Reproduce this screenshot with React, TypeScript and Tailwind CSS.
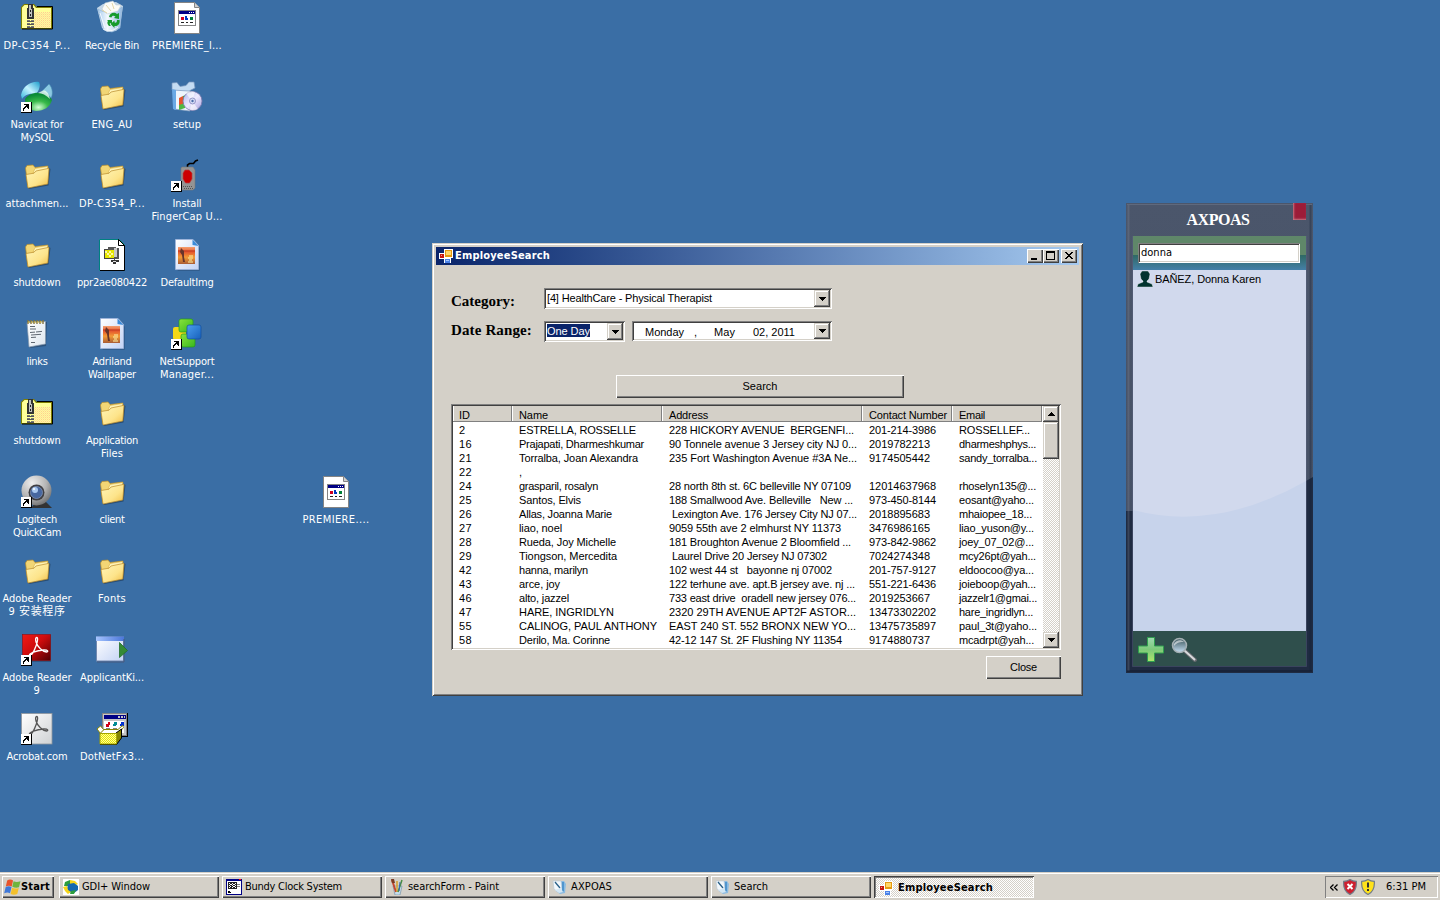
import { useLayoutEffect, useRef } from "react";
import type { ReactNode } from "react";

/* ---------- text with a fixed advance width ---------- */

function Fit({ w, children, className = "" }: { w: number; children: string; className?: string }) {
  const ref = useRef<HTMLSpanElement>(null);
  useLayoutEffect(() => {
    const el = ref.current;
    if (!el) return;
    el.style.letterSpacing = "0px";
    const natural = el.getBoundingClientRect().width;
    el.style.letterSpacing = `${(w + 1 - natural) / Array.from(children).length}px`;
  }, [w, children]);
  return (
    <span ref={ref} className={`inline-block whitespace-pre ${className}`}>
      {children}
    </span>
  );
}

/* ---------- 32px desktop icons ---------- */

function Svg32({ children }: { children: ReactNode }) {
  return (
    <svg width="32" height="32" viewBox="0 0 32 32" className="block overflow-visible">
      {children}
    </svg>
  );
}

const Shortcut = () => (
  <g shapeRendering="crispEdges">
    <rect x="0" y="21" width="11" height="11" fill="#000" />
    <rect x="0" y="21" width="10" height="10" fill="#fff" />
    <path d="M3 23h5v5h-1v-1h-1v-1h-1v1h-1v1h-1v2h-1v-3h1v-1h1v-1h1v-1h-2z" fill="#000" />
  </g>
);

const Folder = () => (
  <Svg32>
    <path d="M8 29 27.500 25.500 29.500 9 28 8 26 24 7 28z" fill="#1d3654" opacity=".6" />
    <path d="M4.500 8 6 5.500 12 5 14 7.500 27 6 26 21 7 27z" fill="#f2d675" stroke="#b78c29" strokeWidth=".7" />
    <path d="M14 8.500 26.500 6.500 26.500 12 12 13z" fill="#fff3b5" stroke="#d4a93c" strokeWidth=".5" />
    <path d="M5 14.500 13 13.200 15 11 28 8.300 26.800 24 7 28z" fill="url(#folderFront)" stroke="#b9892a" strokeWidth=".7" />
  </Svg32>
);

const ZipFolder = () => (
  <Svg32>
    <path d="M0 5 3 2h10l3 3h15v22H0z" fill="#808000" />
    <path d="M1 5.500 3.500 3h9L15 6h15v20H1z" fill="#ffff99" />
    <path d="M13 10h17v16H13z" fill="url(#peachDots)" />
    <path d="M16 4.500h15.500v22.500H1" fill="none" stroke="#000" strokeWidth="1" />
    <g shapeRendering="crispEdges">
      <path d="M7 2h5v4h1v11H6V6h1z" fill="#333" />
      <path d="M8 3h2v4h1v8H8z" fill="#c0c0c0" />
      <path d="M9 8h1v2H9zM9 12h1v2H9z" fill="#222" />
      <path d="M6 18h3v2H6zM10 18h3v2h-3zM6 21h3v2H6zM10 21h3v2h-3zM6 24h3v2H6zM10 24h3v2h-3z" fill="#777" />
      <path d="M6 19h7M6 22h7M6 25h7" stroke="#555" />
    </g>
  </Svg32>
);

const RecycleBin = () => (
  <Svg32>
    <path d="M1 6 7 2l13-2 7 4-3 21-4 4-9 1-5-4z" fill="#dceaf5" opacity=".85" />
    <path d="M2 7c6 5 18 4 24-2L24 26l-8 4-8-2z" fill="url(#glass)" stroke="#8fb4d6" strokeWidth=".6" />
    <path d="M9 1l8-2 3 4 5 0-3 6-11 3-5-5z" fill="#fbfbf6" stroke="#b7c6d0" strokeWidth=".5" />
    <path d="M10 3l5 6M16 1l2 6M6 8l5 3" stroke="#e3d7aa" strokeWidth="1" />
    <path d="M13 15c1-5 6-5 8-3l2-1v6l-5-1 1.500-1.500c-2-1.500-3.500-1-4 1zM21 18h2.500c1 4-2 6.500-5 6v2l-4-4 4-3.500v2c2 .5 2.500-.5 2.500-2.500zM13 24c-2-2-2-4-1-5l-1-1 5 0 0 4-2-1c-.5 1 0 2 1 3z" fill="#169b2b" />
    <path d="M4 11l5 15M7 27c5 3 11 2 15-2" fill="none" stroke="#fff" strokeWidth="1" opacity=".8" />
  </Svg32>
);

const ExePage = () => (
  <Svg32>
    <path d="M3.500.5h20l5 5v26h-25z" fill="#fff" stroke="#848484" />
    <path d="M23.500.5v5h5" fill="#d0d0d0" stroke="#848484" />
    <g shapeRendering="crispEdges">
      <rect x="7" y="8" width="18" height="16" fill="#848484" />
      <rect x="8" y="9" width="16" height="14" fill="#fff" />
      <rect x="8" y="9" width="16" height="3" fill="#000084" />
      <path d="M18 10.500h1M20 10.500h1M22 10.500h1" stroke="#fff" />
      <path d="M10 15h3v3h-3z" fill="#d00020" />
      <path d="M14 14h2v2h1v2h-3z" fill="#0038c0" />
      <path d="M19 15h3v3h-3z" fill="#008038" />
      <path d="M10 20.500h3M15 20.500h2M19 20.500h3" stroke="#222" />
    </g>
  </Svg32>
);

const Navicat = () => (
  <Svg32>
    <path d="M0 14C2 5 10 0 18 1c2 3 0 9-3 12C10 12 4 13 1 18z" fill="url(#cyan)" />
    <path d="M21 10 28 3c4 4 4 11 2 14-2-3-5-5-9-7z" fill="#8cc9e2" stroke="#4a91b6" strokeWidth=".6" />
    <path d="M4 18c3-5 12-8 19-5 4 1 7 4 8 6-2 7-8 11-16 11C8 29 4 24 4 18z" fill="url(#greenBall)" />
    <path d="M17 12c4 0 8 2 12 6-2-9-6-9-8-8z" fill="#e9fff0" opacity=".8" />
    <Shortcut />
  </Svg32>
);

const Setup = () => (
  <Svg32>
    <path d="M2 5 19 7v23L3 28z" fill="#eef5fc" stroke="#8ba6c5" strokeWidth=".7" />
    <path d="M1 2 6 1.500l3 4 6-1 3-3.500 5 0 1 6-6 3-17-1z" fill="#c4dcf3" stroke="#7997bd" strokeWidth=".7" />
    <path d="M1 8 5 9v20l-3-1z" fill="#69a9e5" />
    <path d="M8 17l4-2v9l-4 2z" fill="#e5542d" />
    <path d="M12 15l3-1v9l-3 1z" fill="#45a33a" />
    <path d="M8 24l6-2v5l-6 2z" fill="#4fb843" />
    <circle cx="21.500" cy="20" r="9.500" fill="url(#disc)" stroke="#7d7aac" strokeWidth=".8" />
    <path d="M21 20 15 12.500a9 9 0 0 1 9-1.500zM21 20l6 8a10 10 0 0 1-8 .8z" fill="#fff" opacity=".6" />
    <circle cx="21.500" cy="20" r="3" fill="#d8dff8" stroke="#8080b8" strokeWidth=".8" />
    <circle cx="21.500" cy="20" r="1.200" fill="#4d6ea8" />
  </Svg32>
);

const FingerCap = () => (
  <Svg32>
    <path d="M16.500 7V5l2-1.500h4l2-2.500 2.500-1" fill="none" stroke="#000" strokeWidth="1.600" />
    <path d="M11 7h11l2 3v18l-2 2H10V8z" fill="#949494" stroke="#777" strokeWidth=".6" />
    <path d="M14 10h4l3 3v6l-2.500 4h-4L12 19v-6z" fill="#cc0000" stroke="#b34040" strokeWidth=".7" />
    <path d="M12 26.500h9M13 28.500h9" stroke="#555" strokeDasharray="1 1" />
    <Shortcut />
  </Svg32>
);

const WinZipPage = () => (
  <Svg32>
    <path d="M3.500.5h20l5 5v26h-25z" fill="#fff" stroke="#008080" />
    <path d="M4 31.500h24.500V6" fill="none" stroke="#000" />
    <path d="M22.500.5v6h6z" fill="#fff" stroke="#000" />
    <g shapeRendering="crispEdges">
      <path d="M8 10h14v9h-4v1H8z" fill="#444" />
      <path d="M12 8h8v1h3v11h-4v1h-1v-3h2v-6h-8z" fill="#555" />
      <path d="M9 11h9v8H9z" fill="#e5e600" />
      <path d="M9 12h2v2H9zM13 12h2v2h-2zM11 14h2v2h-2zM15 14h2v2h-2zM13 16h2v2h-2z" fill="#fff8a0" />
      <path d="M18 9h3v9h-3z" fill="#c8c8c8" />
      <path d="M15 21h8v2h-3v2h-3v-2h-2z" fill="#333" />
      <path d="M17 22h3v1h-3z" fill="#ddd" />
    </g>
  </Svg32>
);

const PicturePage = () => (
  <Svg32>
    <path d="M5 1.500h17l6 6.500v23l-22 0z" fill="#1d3654" opacity=".4" transform="translate(.7 .7)" />
    <path d="M4.500 .5h17.500l5.500 6v24h-23z" fill="url(#page)" stroke="#9fb5dc" strokeWidth=".8" />
    <path d="M21.500 .5l6 6.500-6-1z" fill="#3b8bd9" />
    <g>
      <rect x="7" y="8" width="17" height="17" fill="url(#sunset)" />
      <path d="M7 12h17" stroke="#bb2e18" />
      <path d="M10 9l3 3v6l1 5h-2l-1-7-2-3z" fill="#67352b" />
      <path d="M18 17h4M17 19h5M18 21h3M17 23h5" stroke="#fff4a8" strokeWidth="1" />
    </g>
  </Svg32>
);

const Notepad = () => (
  <Svg32>
    <path d="M6 5 26 4 25 28 9 30z" fill="#1d3654" opacity=".5" />
    <path d="M6 4.500 24.500 3.500 24.500 26 8 29z" fill="url(#note)" stroke="#8799ad" strokeWidth=".7" />
    <path d="M7 2v4M10 2v4M13 2v4M16 2v4M19 2v4M22 2v4" stroke="#86743f" strokeWidth="1.400" />
    <path d="M8 3v2M11 3v2M14 3v2M17 3v2M20 3v2" stroke="#e7c443" strokeWidth="1" />
    <path d="M9 8.500h5M9 11h6M9 14.500l5-.4M15 14l6-.6M10 17l10-.7M10 19.500l5-.3M10 24.500h4" stroke="#5f6771" strokeWidth="1" />
  </Svg32>
);

const NetSupport = () => (
  <Svg32>
    <rect x="2" y="9" width="13" height="13" rx="2" fill="#f5d918" />
    <rect x="10" y="16" width="14" height="13" rx="2" fill="url(#lime)" stroke="#259c17" strokeWidth=".7" />
    <rect x="8" y="1" width="14" height="13" rx="2" fill="url(#lime)" stroke="#259c17" strokeWidth=".7" />
    <rect x="16" y="7" width="14" height="14" rx="2" fill="url(#blueBox)" stroke="#124f9d" strokeWidth=".7" />
    <Shortcut />
  </Svg32>
);

const QuickCam = () => (
  <Svg32>
    <path d="M10 32 15 26h10l6 6z" fill="#333" />
    <circle cx="15.500" cy="14.500" r="15" fill="url(#silver)" />
    <circle cx="15.500" cy="16.500" r="8" fill="#3f3f43" />
    <circle cx="15.500" cy="16.500" r="6" fill="#4767a0" stroke="#7d91b5" strokeWidth=".8" />
    <circle cx="14" cy="14" r="3" fill="#a9c8ef" />
    <circle cx="13" cy="13" r="1" fill="#fff" />
    <Shortcut />
  </Svg32>
);

const Loops = ({ stroke }: { stroke: string }) => (
  <path
    d="M8.500 21.500c-1-2 7-5 14-5.500 5-.3 5 2 3 2-4-.5-9-5-10.500-10-.8-3-.3-4.500.7-4.500 1.500 0 1 4-.7 8.500-2 5.500-5 10-6.500 9.500z"
    fill="none"
    stroke={stroke}
    strokeWidth="1.300"
  />
);

const AdobeReader = () => (
  <Svg32>
    <rect x="2" y="1" width="28" height="27" fill="#243c5e" opacity=".5" />
    <rect x="1.500" y=".5" width="28" height="26" fill="url(#adobe)" stroke="#8e0d10" strokeWidth=".6" />
    <Loops stroke="#fff" />
    <Shortcut />
  </Svg32>
);

const AcrobatCom = () => (
  <Svg32>
    <rect x=".5" y=".5" width="30.500" height="30.500" fill="url(#acro)" stroke="#8e969d" strokeWidth=".8" />
    <Loops stroke="#555" />
    <Shortcut />
  </Svg32>
);

const AppWindow = () => (
  <Svg32>
    <rect x="0.500" y="3" width="27" height="24" fill="url(#page)" stroke="#7289b0" strokeWidth="1" />
    <rect x="0" y="2.500" width="28" height="4.500" fill="url(#bar)" />
    <path d="M28 5v23H1" stroke="#47597e" strokeWidth="1" fill="none" />
    <path d="M23.500 8.500v15l8-7z" fill="#358a35" stroke="#226e2a" strokeWidth=".8" />
  </Svg32>
);

const DotNetSetup = () => (
  <Svg32>
    <g shapeRendering="crispEdges">
      <rect x="6" y="0" width="26" height="24" fill="#000" />
      <rect x="6" y="0" width="25" height="23" fill="#848484" />
      <rect x="7" y="1" width="23" height="21" fill="#c6c6c6" />
      <rect x="8" y="2" width="22" height="4" fill="#000084" />
      <path d="M22 3h2v2h-2zM25 3h2v2h-2zM28 3h1v2h-1z" fill="#c6c6c6" />
      <rect x="8" y="8" width="20" height="12" fill="#fff" />
      <path d="M10 11h2v-2h2v3h-1v2h-3z" fill="#d00018" />
      <path d="M18 9h3v3h-1v1h-3v-2h1z" fill="#008c94" />
      <path d="M25 9h3v4h-4v-2h1z" fill="#0030d0" />
      <path d="M10 15.500h4M17 15.500h4" stroke="#848484" />
    </g>
    <path d="M4.500 20.500 1 16l3.500-3 3.500 4z" fill="#fff" stroke="#848400" />
    <path d="M4 20.500 8 16.500h14l4.500-4 1 2L22 21z" fill="#fff" stroke="#848400" />
    <path d="M20 20l5.500-4v9l-5 6.500H4" fill="#848400" stroke="#000" />
    <path d="M4 20.500h16.500v10.500H4z" fill="url(#oliveDots)" stroke="#a5a500" />
  </Svg32>
);

function Defs() {
  return (
    <svg width="0" height="0" className="absolute">
      <defs>
        <linearGradient id="folderFront" x1="0" y1="0" x2="1" y2="1"><stop offset="0" stopColor="#fff6ba" /><stop offset=".6" stopColor="#fde48b" /><stop offset="1" stopColor="#f0bd45" /></linearGradient>
        <linearGradient id="glass" x1="0" y1="0" x2="1" y2="0"><stop offset="0" stopColor="#a8cdf0" /><stop offset=".4" stopColor="#f4f9fd" /><stop offset="1" stopColor="#93b9e1" /></linearGradient>
        <linearGradient id="cyan" x1="0" y1="1" x2="1" y2="0"><stop offset="0" stopColor="#36b8de" /><stop offset=".5" stopColor="#c5f3ff" /><stop offset="1" stopColor="#1d9dcc" /></linearGradient>
        <radialGradient id="greenBall" cx=".5" cy=".8" r=".7"><stop offset="0" stopColor="#d4ffd5" /><stop offset=".5" stopColor="#3aba4a" /><stop offset="1" stopColor="#0b8c38" /></radialGradient>
        <linearGradient id="disc" x1="0" y1="0" x2="1" y2="1"><stop offset="0" stopColor="#aeb6ed" /><stop offset=".5" stopColor="#efeaff" /><stop offset="1" stopColor="#a6a0de" /></linearGradient>
        <linearGradient id="page" x1="0" y1="0" x2="1" y2="1"><stop offset="0" stopColor="#ffffff" /><stop offset="1" stopColor="#c3d3f5" /></linearGradient>
        <linearGradient id="sunset" x1="0" y1="0" x2="0" y2="1"><stop offset="0" stopColor="#f4a070" /><stop offset=".3" stopColor="#e4572e" /><stop offset=".6" stopColor="#f39a35" /><stop offset="1" stopColor="#a95c35" /></linearGradient>
        <linearGradient id="note" x1="0" y1="0" x2="1" y2="1"><stop offset="0" stopColor="#ffffff" /><stop offset="1" stopColor="#dce5ee" /></linearGradient>
        <linearGradient id="lime" x1="0" y1="0" x2="1" y2="1"><stop offset="0" stopColor="#8be23c" /><stop offset="1" stopColor="#36b81c" /></linearGradient>
        <linearGradient id="blueBox" x1="0" y1="0" x2="1" y2="1"><stop offset="0" stopColor="#4a9eee" /><stop offset="1" stopColor="#1760bc" /></linearGradient>
        <radialGradient id="silver" cx=".35" cy=".25" r=".8"><stop offset="0" stopColor="#eeeeee" /><stop offset=".6" stopColor="#b4b4b4" /><stop offset="1" stopColor="#707070" /></radialGradient>
        <linearGradient id="adobe" x1="0" y1="0" x2="1" y2="1"><stop offset="0" stopColor="#f01a16" /><stop offset=".45" stopColor="#cf0c0d" /><stop offset="1" stopColor="#4f0003" /></linearGradient>
        <linearGradient id="acro" x1="0" y1="0" x2="1" y2="1"><stop offset="0" stopColor="#ffffff" /><stop offset="1" stopColor="#cfd2d4" /></linearGradient>
        <linearGradient id="bar" x1="0" y1="0" x2="1" y2="0"><stop offset="0" stopColor="#a5c4ff" /><stop offset="1" stopColor="#4a76d8" /></linearGradient>
        <linearGradient id="plus" x1="0" y1="0" x2="0" y2="1"><stop offset="0" stopColor="#9ed9b0" /><stop offset=".5" stopColor="#7cc97a" /><stop offset="1" stopColor="#aee66c" /></linearGradient>
        <linearGradient id="lens" x1="0" y1="0" x2="0" y2="1"><stop offset="0" stopColor="#38545a" /><stop offset="1" stopColor="#c7e0f4" /></linearGradient>
        <pattern id="peachDots" width="2" height="2" patternUnits="userSpaceOnUse"><rect width="1" height="1" fill="#ffcb94" /><rect x="1" y="1" width="1" height="1" fill="#ffdfa0" /></pattern>
        <pattern id="oliveDots" width="2" height="2" patternUnits="userSpaceOnUse"><rect width="2" height="2" fill="#e7e700" /><rect width="1" height="1" fill="#fffb9c" /><rect x="1" y="1" width="1" height="1" fill="#fffb9c" /></pattern>
      </defs>
    </svg>
  );
}

/* ---------- desktop shortcuts ---------- */

type Line = [string, number];
type Item = { icon: ReactNode; lines: Line[] };

const columns: Item[][] = [
  [
    { icon: <ZipFolder />, lines: [["DP-C354_P...", 66]] },
    { icon: <Navicat />, lines: [["Navicat for", 52], ["MySQL", 32]] },
    { icon: <Folder />, lines: [["attachmen...", 62]] },
    { icon: <Folder />, lines: [["shutdown", 46]] },
    { icon: <Notepad />, lines: [["links", 20]] },
    { icon: <ZipFolder />, lines: [["shutdown", 46]] },
    { icon: <QuickCam />, lines: [["Logitech", 39], ["QuickCam", 47]] },
    { icon: <Folder />, lines: [["Adobe Reader", 68], ["9 安装程序", 56]] },
    { icon: <AdobeReader />, lines: [["Adobe Reader", 68], ["9", 6]] },
    { icon: <AcrobatCom />, lines: [["Acrobat.com", 60]] },
  ],
  [
    { icon: <RecycleBin />, lines: [["Recycle Bin", 53]] },
    { icon: <Folder />, lines: [["ENG_AU", 40]] },
    { icon: <Folder />, lines: [["DP-C354_P...", 65]] },
    { icon: <WinZipPage />, lines: [["ppr2ae080422", 69]] },
    { icon: <PicturePage />, lines: [["Adriland", 38], ["Wallpaper", 47]] },
    { icon: <Folder />, lines: [["Application", 51], ["Files", 21]] },
    { icon: <Folder />, lines: [["client", 24]] },
    { icon: <Folder />, lines: [["Fonts", 27]] },
    { icon: <AppWindow />, lines: [["ApplicantKi...", 63]] },
    { icon: <DotNetSetup />, lines: [["DotNetFx3...", 63]] },
  ],
  [
    { icon: <ExePage />, lines: [["PREMIERE_l...", 69]] },
    { icon: <Setup />, lines: [["setup", 27]] },
    { icon: <FingerCap />, lines: [["Install", 28], ["FingerCap U...", 70]] },
    { icon: <PicturePage />, lines: [["DefaultImg", 52]] },
    { icon: <NetSupport />, lines: [["NetSupport", 54], ["Manager...", 53]] },
  ],
];

function DesktopIcon({ icon, lines }: Item) {
  return (
    <div className="flex h-[79px] w-[75px] flex-col items-center pr-px text-[11px] leading-[13px] text-white">
      <div className="flex h-[39px] shrink-0 items-start pt-0.5 pr-px">{icon}</div>
      {lines.map(([text, w]) => (
        <Fit key={text} w={w} className="h-[13px] shrink-0">{text}</Fit>
      ))}
    </div>
  );
}

/* ---------- classic controls ---------- */

const raised =
  "bg-[#d4d0c8] shadow-[inset_1px_1px_0_#fff,inset_-1px_-1px_0_#404040,inset_-2px_-2px_0_#808080]";
const scrollRaised =
  "bg-[#d4d0c8] shadow-[inset_-1px_-1px_0_#404040,inset_1px_1px_0_#d4d0c8,inset_-2px_-2px_0_#808080,inset_2px_2px_0_#fff]";
const sunken =
  "bg-white shadow-[inset_1px_1px_0_#808080,inset_-1px_-1px_0_#fff,inset_2px_2px_0_#404040,inset_-2px_-2px_0_#d4d0c8]";
const dither =
  "bg-[repeating-conic-gradient(#fff_0_25%,#d4d0c8_0_50%)] bg-[length:2px_2px]";

const Arrow = ({ up = false }: { up?: boolean }) => (
  <svg width="7" height="4" viewBox="0 0 7 4" shapeRendering="crispEdges" className={up ? "rotate-180" : ""}>
    <path d="M0 0h7v1H6v1H5v1H4v1H3V3H2V2H1V1H0z" fill="#000" />
  </svg>
);

const ScrollButton = ({ up = false, tall = false }: { up?: boolean; tall?: boolean }) => (
  <div className={`flex w-4 shrink-0 items-center justify-center ${tall ? "h-[17px]" : "h-4"} ${scrollRaised}`}>
    <Arrow up={up} />
  </div>
);

const FormIcon = () => (
  <svg width="15" height="15" viewBox="0 0 15 15" shapeRendering="crispEdges">
    <rect x="0" y="4" width="5" height="6" fill="#fff" />
    <rect x="1" y="5" width="4" height="4" fill="#c81810" />
    <rect x="2" y="6" width="1" height="1" fill="#f59b84" />
    <rect x="5" y="0" width="9" height="9" fill="#fff" />
    <rect x="6" y="1" width="7" height="7" fill="#e59a10" />
    <rect x="7" y="2" width="5" height="4" fill="#ffd768" />
    <rect x="5" y="9" width="7" height="5" fill="#fff" />
    <rect x="6" y="10" width="5" height="4" fill="#4a82e8" />
    <rect x="7" y="11" width="3" height="1" fill="#a5c7ff" />
  </svg>
);

/* ---------- employee list ---------- */

type Cell = [string, number];
type Row = [string, Cell, Cell, Cell, Cell];

const rows: Row[] = [
  ["2", ["ESTRELLA, ROSSELLE", 116], ["228 HICKORY AVENUE  BERGENFI...", 184], ["201-214-3986", 66], ["ROSSELLEF...", 70]],
  ["16", ["Prajapati, Dharmeshkumar", 124], ["90 Tonnele avenue 3 Jersey city NJ 0...", 187], ["2019782213", 60], ["dharmeshphys...", 76]],
  ["21", ["Torralba, Joan Alexandra", 118], ["235 Fort Washington Avenue #3A Ne...", 187], ["9174505442", 60], ["sandy_torralba...", 77]],
  ["22", [",", 3], ["", 0], ["", 0], ["", 0]],
  ["24", ["grasparil, rosalyn", 78], ["28 north 8th st. 6C belleville NY 07109", 181], ["12014637968", 66], ["rhoselyn135@...", 76]],
  ["25", ["Santos, Elvis", 61], ["188 Smallwood Ave. Belleville   New ...", 183], ["973-450-8144", 66], ["eosant@yaho...", 74]],
  ["26", ["Allas, Joanna Marie", 92], [" Lexington Ave. 176 Jersey City NJ 07...", 187], ["2018895683", 60], ["mhaiopee_18...", 72]],
  ["27", ["liao, noel", 42], ["9059 55th ave 2 elmhurst NY 11373", 171], ["3476986165", 60], ["liao_yuson@y...", 74]],
  ["28", ["Rueda, Joy Michelle", 96], ["181 Broughton Avenue 2 Bloomfield ...", 181], ["973-842-9862", 66], ["joey_07_02@...", 74]],
  ["29", ["Tiongson, Mercedita", 97], [" Laurel Drive 20 Jersey NJ 07302", 157], ["7024274348", 60], ["mcy26pt@yah...", 76]],
  ["42", ["hanna, marilyn", 68], ["102 west 44 st   bayonne nj 07002", 162], ["201-757-9127", 66], ["eldoocoo@ya...", 74]],
  ["43", ["arce, joy", 40], ["122 terhune ave. apt.B jersey ave. nj ...", 185], ["551-221-6436", 66], ["joieboop@yah...", 76]],
  ["46", ["alto, jazzel", 49], ["733 east drive  oradell new jersey 076...", 186], ["2019253667", 60], ["jazzelr1@gmai...", 77]],
  ["47", ["HARE, INGRIDLYN", 94], ["2320 29TH AVENUE APT2F ASTOR...", 186], ["13473302202", 66], ["hare_ingridlyn...", 73]],
  ["55", ["CALINOG, PAUL ANTHONY", 137], ["EAST 240 ST. 552 BRONX NEW YO...", 186], ["13475735897", 66], ["paul_3t@yaho...", 77]],
  ["58", ["Derilo, Ma. Corinne", 90], ["42-12 147 St. 2F Flushing NY 11354", 172], ["9174880737", 60], ["mcadrpt@yah...", 74]],
];

const gridCols = "grid grid-cols-[59px_150px_200px_90px_90px]";

const headers: Cell[] = [["ID", 10], ["Name", 28], ["Address", 38], ["Contact Number", 77], ["Email", 25]];

function EmployeeList() {
  return (
    <div className={`flex h-[246px] w-[610px] p-0.5 ${sunken}`}>
      <div className="w-[589px]">
        <div className={`${gridCols} h-4 bg-[#d4d0c8] leading-[18px]`}>
          {headers.map(([text, w], i) => (
            <div key={text} className={`h-4 border-r border-b border-[#808080] shadow-[inset_1px_0_0_#fff,inset_-1px_0_0_#d4d0c8] ${i ? "pl-[7px]" : "pl-1.5"}`}>
              <Fit w={w}>{text}</Fit>
            </div>
          ))}
        </div>
        <div className="pt-px">
          {rows.map(([id, ...cells]) => (
            <div key={id} className={`${gridCols} h-3.5 leading-[14px]`}>
              <div className="pl-1.5"><Fit w={id.length * 6}>{id}</Fit></div>
              {cells.map(([text, w], i) => (
                <div key={i} className="pl-[7px]">{text && <Fit w={w}>{text}</Fit>}</div>
              ))}
            </div>
          ))}
        </div>
      </div>
      <div className={`ml-auto flex w-4 flex-col ${dither}`}>
        <ScrollButton up />
        <div className={`h-[37px] ${scrollRaised}`} />
        <div className="flex-1" />
        <ScrollButton />
      </div>
    </div>
  );
}

const capButton = `flex h-3.5 w-4 items-center justify-center ${raised}`;

function EmployeeWindow() {
  return (
    <div className="absolute top-[243px] left-[432px] flex h-[453px] w-[651px] flex-col bg-[#d4d0c8] p-1 font-['Liberation_Sans',sans-serif] text-[11px] text-black shadow-[inset_1px_1px_0_#d4d0c8,inset_-1px_-1px_0_#404040,inset_2px_2px_0_#fff,inset_-2px_-2px_0_#808080]">
      <div className="flex h-[18px] items-center bg-linear-to-r from-[#0a246a] to-[#a6caf0] pr-0.5 pl-[3px] leading-[18px]">
        <FormIcon />
        <Fit w={94} className="ml-px font-['DejaVu_Sans_Condensed','DejaVu_Sans',sans-serif] font-bold text-white">EmployeeSearch</Fit>
        <div className={`ml-auto ${capButton}`}>
          <svg width="12" height="10" shapeRendering="crispEdges"><path d="M2 7h6v2H2z" /></svg>
        </div>
        <div className={capButton}>
          <svg width="10" height="10" shapeRendering="crispEdges"><path d="M0 0h9v9H0zM1 2v6h7V2z" fillRule="evenodd" /></svg>
        </div>
        <div className={`ml-0.5 ${capButton}`}>
          <svg width="9" height="8" shapeRendering="crispEdges"><path d="M0 0h2v1h1v1h2V1h1V0h2v1H7v1H6v1H5v1h1v1h1v1h1v1H6V6H5V5H3v1H2v1H0V6h1V5h1V4h1V3H2V2H1V1H0z" /></svg>
        </div>
      </div>

      <div className="flex flex-col pl-[15px]">
        <div className="mt-[23px] flex h-[33px] items-start">
          <div className="w-[93px] pt-1 font-['Liberation_Serif',serif] text-[15px] leading-[18px] font-bold">
            <Fit w={63}>Category:</Fit>
          </div>
          <div className={`flex h-[21px] w-[288px] justify-between p-0.5 ${sunken}`}>
            <Fit w={164} className="ml-px leading-4">[4] HealthCare - Physical Therapist</Fit>
            <ScrollButton tall />
          </div>
        </div>
        <div className="flex h-[21px] items-start">
          <div className="w-[93px] font-['Liberation_Serif',serif] text-[15px] leading-[18px] font-bold">
            <Fit w={80}>Date Range:</Fit>
          </div>
          <div className={`flex h-[21px] w-[81px] items-start justify-between p-0.5 ${sunken}`}>
            <div className="ml-px h-[13px] w-[43px] translate-y-px bg-[#0a246a] leading-[14px] text-white"><Fit w={42}>One Day</Fit></div>
            <ScrollButton tall />
          </div>
          <div className={`ml-[7px] flex h-[20px] w-[200px] justify-between p-0.5 leading-[18px] ${sunken}`}>
            <div className="flex pl-[11px]">
              <div className="w-[49px]"><Fit w={38}>Monday</Fit></div>
              <div className="w-5"><Fit w={3}>,</Fit></div>
              <div className="w-[39px]"><Fit w={20}>May</Fit></div>
              <Fit w={41}>02, 2011</Fit>
            </div>
            <ScrollButton />
          </div>
        </div>
        <div className={`mt-[33px] ml-[165px] flex h-[23px] w-[288px] items-center justify-center ${raised}`}>
          <Fit w={34}>Search</Fit>
        </div>
        <div className="mt-1.5"><EmployeeList /></div>
        <div className={`mt-1.5 ml-[535px] flex h-[23px] w-[75px] items-center justify-center ${raised}`}>
          <Fit w={26}>Close</Fit>
        </div>
      </div>
    </div>
  );
}

/* ---------- AXPOAS widget ---------- */

function AxpoasWidget() {
  return (
    <div className="absolute top-[203px] left-[1126px] flex h-[470px] w-[187px] flex-col bg-[linear-gradient(#4b566b,#465166_308px,#1f2b42_308px)] px-[7px] pb-[7px] text-[11px]">
      <svg width="187" height="470" className="absolute top-0 left-0">
        <path d="M187 274V320H180V278z" fill="#1f2b42" />
        <path d="M2.500 2V468" stroke="#8d95a5" strokeOpacity=".25" strokeWidth="2" />
        <path d="M184.500 2V468" stroke="#101a2e" strokeOpacity=".3" strokeWidth="2" />
        <path d="M1 1.500H186" stroke="#6c7689" strokeOpacity=".6" strokeWidth="1" />
        <path d="M1 468H186" stroke="#101a2e" strokeOpacity=".4" strokeWidth="2" />
        <path d="M6.500 33V463.500H180.500V33" fill="none" stroke="#5a6480" strokeOpacity=".45" />
      </svg>
      <div className="relative flex h-[33px] justify-center font-['Liberation_Serif',serif] text-[16px] leading-[33px] font-bold text-white">
        <Fit w={62} className="mr-[3px]">AXPOAS</Fit>
        <div className="absolute top-0 right-0 h-[17px] w-[13px] bg-[#9c1c38] shadow-[inset_1px_-1px_2px_#c87886]" />
      </div>
      <div className="relative h-[34px] bg-[linear-gradient(#5f8769_0_19px,#2e6864_19px,#4580a8_100%)] px-[5px] pt-[7px]">
        <div className={`h-5 w-[162px] pl-[3px] font-['DejaVu_Sans_Condensed','DejaVu_Sans',sans-serif] leading-5 ${sunken}`}>
          <Fit w={30}>donna</Fit>
        </div>
      </div>
      <div className="relative h-[361px] bg-[#c7d3eb]">
        <svg width="173" height="361" className="absolute top-0 left-0">
          <path d="M0 0H173V211Q83 262 0 240z" fill="#d1d9ed" />
        </svg>
        <div className="relative flex h-[18px] items-center pl-1 leading-[18px]">
          <svg width="16" height="16" viewBox="0 0 16 16">
            <path d="M5 0h6l2 3-1 5-2 2v1l5 2 1 3H0l1-3 5-2v-1L4 8 3 3z" fill="#00332f" stroke="#fff" strokeWidth=".4" />
          </svg>
          <Fit w={105} className="ml-0.5 font-['Liberation_Sans',sans-serif]">BAÑEZ, Donna Karen</Fit>
        </div>
      </div>
      <div className="relative flex h-[35px] items-start bg-[#2f4f4c] pt-1.5 pl-[5px]">
        <svg width="26" height="26" viewBox="0 0 26 26">
          <path d="M9.500.5h7v8.500h9v7h-9v8.500h-7V16H.5V9h9z" fill="url(#plus)" stroke="#2f9e4e" />
        </svg>
        <svg width="26" height="26" viewBox="0 0 26 26" className="ml-[7px]">
          <path d="M14 14l10 9" stroke="#62676c" strokeWidth="4" strokeLinecap="round" />
          <path d="M14 14l9.500 8.500" stroke="#d8dadc" strokeWidth="2" strokeLinecap="round" />
          <circle cx="8.500" cy="8.500" r="7" fill="url(#lens)" stroke="#a5b0b4" strokeWidth="1.500" />
          <path d="M3 7c2-4 7-5 10-2-3 0-7 0-10 4z" fill="#fff" opacity=".55" />
        </svg>
      </div>
    </div>
  );
}

/* ---------- taskbar ---------- */

const WinFlag = () => (
  <svg width="17" height="17" viewBox="0 0 16 16">
    <path d="M3 1.500c2-1.500 4-1 5.500 0L7.300 7C5 6 3.500 6.300 1.700 7z" fill="#e8542c" />
    <path d="M9 2c2 1 4 1 6.500 0l-1.400 5.800C12 8.500 10 8.300 7.800 7.400z" fill="#6fb43d" />
    <path d="M1.600 7.600c2-1 3.700-1 5.500 0L5.700 13.500C4 12.500 2.300 12.500.2 13.500z" fill="#3f78d8" />
    <path d="M7.600 8.200c2 1 4 1 6.300.2l-1.400 5.600c-2 1-4.300 1-6.300 0z" fill="#f4c02a" />
  </svg>
);

const GdiIcon = () => (
  <svg width="16" height="16" viewBox="0 0 16 16">
    <rect width="16" height="16" fill="#fff" />
    <path d="M1 7l1-4 5-2 1 3-3 3z" fill="#2d9e3d" />
    <path d="M7 1l5 1 3 3-4 2-4-2z" fill="#f5d519" />
    <path d="M5 5l6-1 4 3v4l-4 3-5-1-2-3z" fill="#1568ae" />
    <path d="M0 8l4-1 1 4 3 2-3 2-3-3z" fill="#f5d519" />
    <path d="M8 12l5-1-2 4-4 0z" fill="#2d9e3d" />
  </svg>
);

const BundyIcon = () => (
  <svg width="16" height="16" viewBox="0 0 16 16" shapeRendering="crispEdges">
    <rect width="16" height="16" fill="#000084" />
    <rect x="1" y="2" width="14" height="13" fill="#fff" />
    <path d="M2 3h9v7H2z" fill="#222" />
    <path d="M3 4h1v1H3zM6 4h1v1H6zM9 4h1v1H9zM4 5h2v1H4zM7 5h2v1H7zM3 6h1v1H3zM6 6h1v1H6zM9 6h1v1H9zM4 7h1v1H4zM7 7h2v1H7zM3 8h1v1H3zM6 8h1v1H6zM9 8h1v1H9z" fill="#fff" />
    <path d="M11 5h3v1h-3zM11 7h3v1h-3z" fill="#888" />
    <path d="M2 12h2v1h1v1H2z" fill="#000" />
    <path d="M13 0h2v1h-2z" fill="#f00" />
  </svg>
);

const PaintIcon = () => (
  <svg width="16" height="16" viewBox="0 0 16 16">
    <path d="M4 7h9l-2 9H6z" fill="#c5dcec" stroke="#7894a8" strokeWidth=".7" />
    <path d="M3 1l4 12" stroke="#c54630" strokeWidth="2" />
    <path d="M8 2l0 11" stroke="#d9a029" strokeWidth="1.500" />
    <path d="M13 1l-4 12" stroke="#468d42" strokeWidth="1.500" />
    <path d="M11 3l-1 9" stroke="#3a65b5" strokeWidth="1" />
    <path d="M2 0h3l1 4H3z" fill="#7b3c24" />
  </svg>
);

const JavaAppIcon = () => (
  <svg width="16" height="16" viewBox="0 0 16 16">
    <path d="M7 2l5 0 2 3-1 9-5 1-4-3z" fill="#8bbbe2" />
    <path d="M1 2l8 0 1 9-4 2-4-3z" fill="#f3f8fc" stroke="#b5c6d4" strokeWidth=".6" />
    <path d="M3 3l5 6" stroke="#285f87" strokeWidth="1.300" fill="none" />
    <path d="M10 3l2 0 0 9-2 1z" fill="#5196ce" />
    <path d="M3 11l6-2 2 4-4 1z" fill="#d3e7f5" />
  </svg>
);

const tasks: { icon: ReactNode; text: string; w: number }[] = [
  { icon: <GdiIcon />, text: "GDI+ Window", w: 67 },
  { icon: <BundyIcon />, text: "Bundy Clock System", w: 96 },
  { icon: <PaintIcon />, text: "searchForm - Paint", w: 90 },
  { icon: <JavaAppIcon />, text: "AXPOAS", w: 40 },
  { icon: <JavaAppIcon />, text: "Search", w: 33 },
];

const Shield = ({ bad }: { bad: boolean }) => (
  <svg width="14" height="16" viewBox="0 0 14 16">
    <path d="M7 .5c2 1.300 4 1.800 6.300 1.800.5 6-1 10.500-6.300 13.200C1.700 12.800.2 8.300.7 2.300 3 2.300 5 1.800 7 .5z" fill={bad ? "#cf202f" : "#ffe21a"} stroke="#707b88" strokeWidth="1.200" />
    {bad ? <path d="M4.500 5l5 5M9.500 5l-5 5" stroke="#fff" strokeWidth="2" /> : <path d="M7 3.500v5M7 10v2" stroke="#333" strokeWidth="2" />}
  </svg>
);

function Taskbar() {
  return (
    <div className="flex h-[28px] border-t border-[#d4d0c8] bg-[#d4d0c8] text-[11px] text-black shadow-[inset_0_1px_0_#fff]">
      <div className={`mt-[3px] ml-0.5 flex h-[22px] w-[52px] items-center pl-0.5 font-bold ${raised}`}>
        <WinFlag />
        <Fit w={28}>Start</Fit>
      </div>
      <div className="mt-[3px] ml-[5px] flex gap-[3px]">
        {tasks.map(({ icon, text, w }) => (
          <div key={text} className={`flex h-[22px] w-40 items-center gap-[3px] pl-1 ${raised}`}>
            {icon}
            <Fit w={w}>{text}</Fit>
          </div>
        ))}
        <div className={`flex h-[22px] w-40 items-center gap-1 pt-0.5 pl-[5px] font-bold shadow-[inset_1px_1px_0_#404040,inset_-1px_-1px_0_#fff,inset_2px_2px_0_#808080] ${dither}`}>
          <FormIcon />
          <Fit w={94}>EmployeeSearch</Fit>
        </div>
      </div>
      <div className="mt-[3px] mr-0.5 ml-auto flex h-[22px] w-[113px] items-center pl-[5px] shadow-[inset_1px_1px_0_#808080,inset_-1px_-1px_0_#fff]">
        <svg width="8" height="7" viewBox="0 0 8 7" className="mr-[5px]">
          <path d="M3.500.5l-3 3 3 3M7.500.5l-3 3 3 3" fill="none" stroke="#000" strokeWidth="1.300" />
        </svg>
        <Shield bad />
        <span className="w-1" />
        <Shield bad={false} />
        <Fit w={39} className="ml-[11px]">6:31 PM</Fit>
      </div>
    </div>
  );
}

export default function App() {
  return (
    <div className="relative flex h-[900px] w-[1440px] flex-col overflow-hidden bg-[#3a6ea5] font-['DejaVu_Sans_Condensed','DejaVu_Sans','Noto_Sans_CJK_SC',sans-serif]">
      <Defs />
      <main className="flex flex-1">
        {columns.map((items, i) => (
          <div key={i} className="flex flex-col">
            {items.map((item, j) => (
              <DesktopIcon key={j} {...item} />
            ))}
          </div>
        ))}
        <div className="mt-[474px] ml-[74px]">
          <DesktopIcon icon={<ExePage />} lines={[["PREMIERE....", 66]]} />
        </div>
      </main>
      <EmployeeWindow />
      <AxpoasWidget />
      <Taskbar />
    </div>
  );
}
